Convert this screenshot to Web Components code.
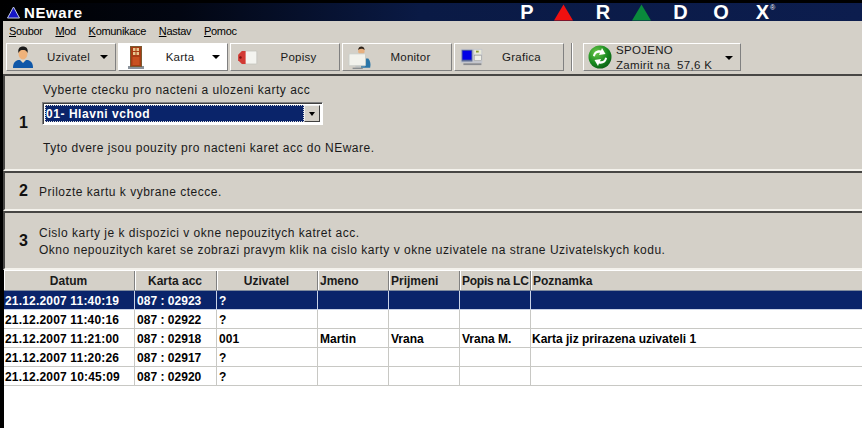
<!DOCTYPE html>
<html><head><meta charset="utf-8"><title>NEware</title>
<style>
html,body{margin:0;padding:0;background:#000;height:100%;overflow:hidden}
body{font-family:"Liberation Sans",Arial,sans-serif}
</style></head><body>
<ne-app>
  <ne-titlebar></ne-titlebar>
  <ne-menubar>
    <ne-menu key="S" rest="oubor"></ne-menu><ne-menu key="M" rest="od"></ne-menu><ne-menu key="K" rest="omunikace"></ne-menu><ne-menu key="N" rest="astav"></ne-menu><ne-menu key="P" rest="omoc"></ne-menu>
  </ne-menubar>
  <ne-toolbar></ne-toolbar>
  <ne-steps></ne-steps>
  <ne-grid></ne-grid>
</ne-app>
<script>
function def(name, css, html, init){
  customElements.define(name, class extends HTMLElement{
    constructor(){super();const r=this.attachShadow({mode:'open'});r.innerHTML='<style>'+css+'</style>'+(typeof html==='function'?html(this):html);}
    connectedCallback(){ if(init&&!this._d){this._d=1;init(this,this.shadowRoot);} }
  });
}
const ICONS={
 user:`<svg width="20" height="23" viewBox="0 0 20 23"><path d="M0 22c0-5 2-7 5-8h10c3 1 5 3 5 8z" fill="#0f57a8"/><path d="M7 14l3 3 3-3z" fill="#e8d8c0"/><ellipse cx="10" cy="7.500" rx="4.500" ry="6" fill="#efb27a"/><path d="M5.500 7C4.500 2.500 7 .5 10 .5s5.500 2 4.500 6.500C13.500 4.500 12 4 10 4S6.500 4.500 5.500 7z" fill="#1a1a1a"/></svg>`,
 door:`<svg width="16" height="24" viewBox="0 0 16 24"><rect x="0" y="21" width="16" height="3" fill="#8a929c"/><rect x="2" y="1" width="12" height="21" fill="#a83c14"/><rect x="2.500" y="1.500" width="11" height="20" fill="none" stroke="#7a5a30"/><g fill="#e8c890"><rect x="5" y="3" width="2.500" height="3"/><rect x="8.500" y="3" width="2.500" height="3"/><rect x="5" y="7" width="2.500" height="3"/><rect x="8.500" y="7" width="2.500" height="3"/></g><rect x="4.500" y="12" width="7" height="8" fill="#c85020"/></svg>`,
 card:`<svg width="21" height="15" viewBox="0 0 22 16"><rect x="5" y="1" width="16" height="14" rx="1" fill="#f4f4f0" stroke="#c8c8c0"/><path d="M9 1H5L1 5v6l4 4h4z" fill="#d23a34"/><circle cx="3.500" cy="8" r="1.300" fill="#7a1410"/></svg>`,
 monitor:`<svg width="24" height="25" viewBox="0 0 26 26"><path d="M14 14h8c2 2 3 6 2 10H14z" fill="#2a76a8"/><ellipse cx="14.500" cy="6" rx="3.500" ry="4" fill="#e6b080"/><path d="M11 5c0-3 2-4 3.500-4S18 2 18 5c-2-2-5-2-7 0z" fill="#2a2018"/><rect x="1" y="9" width="18" height="13" rx="1" fill="#f2f2ec" stroke="#c8ccc8"/><rect x="8" y="22" width="5" height="2" fill="#c0c4c4"/><rect x="5" y="24" width="11" height="1.500" fill="#8a8e90"/></svg>`,
 grafica:`<svg width="23" height="18" viewBox="0 0 24 20"><rect x="0" y="1" width="24" height="16" fill="#c4c6cc"/><rect x="1" y="2" width="12" height="13" fill="#5a6a98"/><rect x="2" y="3" width="10" height="10" fill="#0000e6"/><rect x="15" y="2" width="8" height="5" fill="#e8e8d8"/><rect x="17" y="3" width="3" height="2" fill="#8a9a30"/><rect x="15" y="8" width="8" height="6" fill="#f0f0e8" stroke="#8a8a8a" stroke-width=".5"/><rect x="3" y="17" width="20" height="2" fill="#8a8c90"/></svg>`,
 sync:`<svg width="24" height="24" viewBox="0 0 24 24"><defs><radialGradient id="g" cx=".35" cy=".3" r=".8"><stop offset="0" stop-color="#6cc84a"/><stop offset=".6" stop-color="#17881f"/><stop offset="1" stop-color="#0a5a14"/></radialGradient></defs><circle cx="12" cy="12" r="11.500" fill="url(#g)"/><path d="M5 11c.5-4 4-6.500 8-5.500l1-2.500 3.500 6-6.500 1 1-2.200C9 7.400 7 9 7 11.500zM19 13c-.5 4-4 6.500-8 5.500l-1 2.500-3.500-6 6.500-1-1 2.200c3 .4 5-1.200 5-3.700z" fill="#fff"/></svg>`
};
def('ne-app',':host{display:flex;flex-direction:column;width:862px;height:428px;background:#000;overflow:hidden}','<slot></slot>');
def('ne-titlebar',`:host{display:flex;align-items:center;height:18px;padding:3px 0 0 7px;flex:none;background:linear-gradient(#000 0 3px,transparent 3px),linear-gradient(90deg,#000 0,#020612 180px,#0a1a45 420px,#0c1d4e 100%);color:#fff}
 svg{flex:none}
 .n{font:bold 15px "Liberation Sans",Arial,sans-serif;margin-left:4px;width:60px;letter-spacing:.6px}
 .logo{display:flex;margin-left:425px;align-items:center;height:18px}
 .logo>*{display:flex;justify-content:center;align-items:center;font:bold 20px "Liberation Sans",Arial,sans-serif;line-height:18px;position:relative}
 sup{position:absolute;font:7px "Liberation Sans",Arial,sans-serif;top:1px;left:32px}`,
 `<svg width="13" height="13" viewBox="0 0 13 13"><path d="M6.500 1L12.500 12H.5z" fill="#1616c8" stroke="#c4cce4" stroke-width="1"/></svg><span class="n">NEware</span>
 <div class="logo"><span style="width:36px">P</span><span style="width:36px"><svg width="19" height="17" viewBox="0 0 20 17"><path d="M10 0l10 17H0z" fill="#f01010"/></svg></span><span style="width:44px">R</span><span style="width:32px"><svg width="19" height="17" viewBox="0 0 20 17"><path d="M10 0l10 17H0z" fill="#0a8a3c"/></svg></span><span style="width:47px">D</span><span style="width:34px">O</span><span style="width:49px">X<sup>®</sup></span></div>`);
def('ne-menubar',`:host{display:flex;align-items:center;box-sizing:border-box;height:22px;flex:none;background:#d4d0c8;margin-left:3px;padding:0 0 2px 6px;gap:12.700px;font:11px "Liberation Sans",Arial,sans-serif;letter-spacing:-.3px;color:#000}`,'<slot></slot>');
def('ne-menu',`:host{display:inline-block}u{text-decoration:underline}`,'',(h,r)=>{r.innerHTML+=`<u>${h.getAttribute('key')}</u>${h.getAttribute('rest')}`;});
def('ne-tool',`:host{display:block;box-sizing:border-box;height:28px;width:var(--w,110px);background:var(--bg,#d4d0c8);border:1px solid;border-color:#fff #808080 #808080 #fff;position:relative;font:11.500px "Liberation Sans",Arial,sans-serif;letter-spacing:.25px;color:#1a1a1a}
 .b{display:flex;align-items:center;height:100%}
 .i{width:var(--iw,38px);display:flex;justify-content:center;flex:none}
 .t{flex:1;text-align:center;padding-right:var(--pr,14px)}
 .a{position:absolute;right:7px;top:11px;width:0;height:0;border:4px solid transparent;border-top:4px solid #000;border-bottom:0}`,'',(h,r)=>{
   const a=h.hasAttribute('arrow');
   r.innerHTML+=`<div class="b"><span class="i">${ICONS[h.getAttribute('icon')]}</span><span class="t">${h.getAttribute('label')}</span>${a?'<span class="a"></span>':''}</div>`;
 });
def('ne-toolbar',`:host{display:flex;align-items:flex-start;height:28px;flex:none;background:#d4d0c8;margin-left:3px;padding:0 0 3px 3px}
 ne-tool{margin-right:2px}
 .sep{width:1px;height:28px;background:#808080;border-right:1px solid #fff;margin:0 10px 0 7px}
 .st{box-sizing:border-box;width:158px;height:28px;border:1px solid;border-color:#fff #808080 #808080 #fff;display:flex;align-items:center;position:relative;font:11.500px/15px "Liberation Sans",Arial,sans-serif;letter-spacing:.3px;color:#1a1a1a;padding-left:4px}
 .st svg{flex:none}
 .tx{padding-top:2px}
 .a{position:absolute;right:7px;top:12px;border:4px solid transparent;border-top:4px solid #000;border-bottom:0}`,
 `<ne-tool icon="user" label="Uzivatel" arrow style="--iw:32px;--pr:17px"></ne-tool>
  <ne-tool icon="door" label="Karta" arrow style="--iw:33px;--pr:19px;--bg:#fff"></ne-tool>
  <ne-tool icon="card" label="Popisy" style="--iw:32px;--pr:5px"></ne-tool>
  <ne-tool icon="monitor" label="Monitor" style="--iw:34px;--pr:7px"></ne-tool>
  <ne-tool icon="grafica" label="Grafica" style="--iw:32px;--pr:7px;margin-right:0"></ne-tool>
  <span class="sep"></span>
  <div class="st"><span id="ic"></span><div class="tx">SPOJENO<br>Zamirit na&nbsp; 57,6 K</div><span class="a"></span></div>`,
 (h,r)=>{r.getElementById('ic').innerHTML=ICONS.sync;r.getElementById('ic').style.cssText='display:flex;flex:none;margin-right:4px';});
def('ne-step',`:host{display:flex;align-items:center;box-sizing:border-box;height:var(--h);flex:none;border:2px solid;border-color:#474644 #474644 #f4f2ec #474644;border-right:0;background:#d4d0c8;font:12px/17px "Liberation Sans",Arial,sans-serif;letter-spacing:.5px;color:#1a1a1a}
 .n{font:bold 16px "Liberation Sans",Arial,sans-serif;letter-spacing:0;width:34px;flex:none;padding-left:14px;box-sizing:border-box;color:#111}
 .c{flex:1;align-self:stretch;display:flex;align-items:center;padding-top:2px;box-sizing:border-box}`,'',(h,r)=>{r.innerHTML+=`<span class="n">${h.getAttribute('n')}</span><div class="c"><slot></slot></div>`;});
def('ne-select',`:host{display:flex;box-sizing:border-box;width:281px;height:23px;background:#fff;border:1px solid;border-color:#808080 #fff #fff #808080;box-shadow:inset 1px 1px 0 #404040;padding:2px}
 .v{flex:1;background:#0a246a;color:#fff;font:bold 12px/19px "Liberation Sans",Arial,sans-serif;letter-spacing:.55px;padding-left:1px;outline:1px dotted #ddd;outline-offset:-1px}
 .b{width:16px;flex:none;background:#d4d0c8;border:1px solid;border-color:#eee #404040 #404040 #eee;box-sizing:border-box;display:flex;align-items:center;justify-content:center}
 .b i{border:3.500px solid transparent;border-top:4px solid #000;border-bottom:0}`,
 '<div class="v"><slot></slot></div><div class="b"><i></i></div>');
def('ne-steps',`:host{display:block;flex:none;margin-left:3px;background:#d4d0c8}
 .one{padding:5px 0 0 4px;align-self:flex-start;display:flex;flex-direction:column}
 .one p{margin:0;line-height:15px}
 ne-select{margin:4px 0 16px -1px}`,
 `<ne-step n="1" style="--h:97px"><div class="one"><p>Vyberte ctecku pro nacteni a ulozeni karty acc</p><ne-select>01- Hlavni vchod</ne-select><p>Tyto dvere jsou pouzity pro nacteni karet acc do NEware.</p></div></ne-step>
  <ne-step n="2" style="--h:40px">Prilozte kartu k vybrane ctecce.</ne-step>
  <ne-step n="3" style="--h:59px"><div>Cislo karty je k dispozici v okne nepouzitych katret acc.<br>Okno nepouzitych karet se zobrazi pravym klik na cislo karty v okne uzivatele na strane Uzivatelskych kodu.</div></ne-step>`);
const COLS='131px 82px 101px 71px 71px 71px 1fr';
const SP=['.18px','.02px','.1px','0','0','0','0'];
def('ne-row',`:host{display:grid;grid-template-columns:${COLS};height:19px;box-sizing:border-box;border-bottom:1px solid #c8c8c4;font:bold 12px/20px "Liberation Sans",Arial,sans-serif;color:#000;background:#fff}
 :host([sel]){background:#0a246a;color:#fff;border-bottom-color:#c9d2e6}
 span{box-sizing:border-box;border-right:1px solid #c8c8c4;white-space:nowrap;overflow:hidden}
 :host([sel]) span{border-right-color:#c9d2e6}
 span:last-child{border-right:0}`,'',(h,r)=>{
   r.innerHTML+=h.getAttribute('v').split('|').map((s,i)=>`<span style="padding-left:${i==0||i==6?1:2}px;letter-spacing:${SP[i]}">${s}</span>`).join('');
 });
def('ne-grid',`:host{display:block;flex:1;background:#fff;margin-left:4px}
 .h{display:grid;grid-template-columns:${COLS};height:21px;background:#d4d0c8;box-sizing:border-box;border-top:1px solid #fff;border-bottom:1px solid #7f8a9c;font:bold 12px/21px "Liberation Sans",Arial,sans-serif;color:#1a1a1a}
 .h span{box-sizing:border-box;border-right:1px solid #808080;border-left:1px solid #fff;white-space:nowrap;overflow:hidden}
 .c{text-align:center;padding-right:2px}.l{padding-left:1px}`,
 `<div class="h"><span class="c">Datum</span><span class="c">Karta acc</span><span class="c">Uzivatel</span><span class="l">Jmeno</span><span class="l">Prijmeni</span><span class="l" style="letter-spacing:-.25px">Popis na LC</span><span class="l" style="border-right:0">Poznamka</span></div>
 <ne-row sel v="21.12.2007 11:40:19|087 : 02923|?||||"></ne-row>
 <ne-row v="21.12.2007 11:40:16|087 : 02922|?||||"></ne-row>
 <ne-row v="21.12.2007 11:21:00|087 : 02918|001|Martin|Vrana|Vrana M.|Karta jiz prirazena uzivateli 1"></ne-row>
 <ne-row v="21.12.2007 11:20:26|087 : 02917|?||||"></ne-row>
 <ne-row v="21.12.2007 10:45:09|087 : 02920|?||||"></ne-row>`);
</script>
</body></html>
